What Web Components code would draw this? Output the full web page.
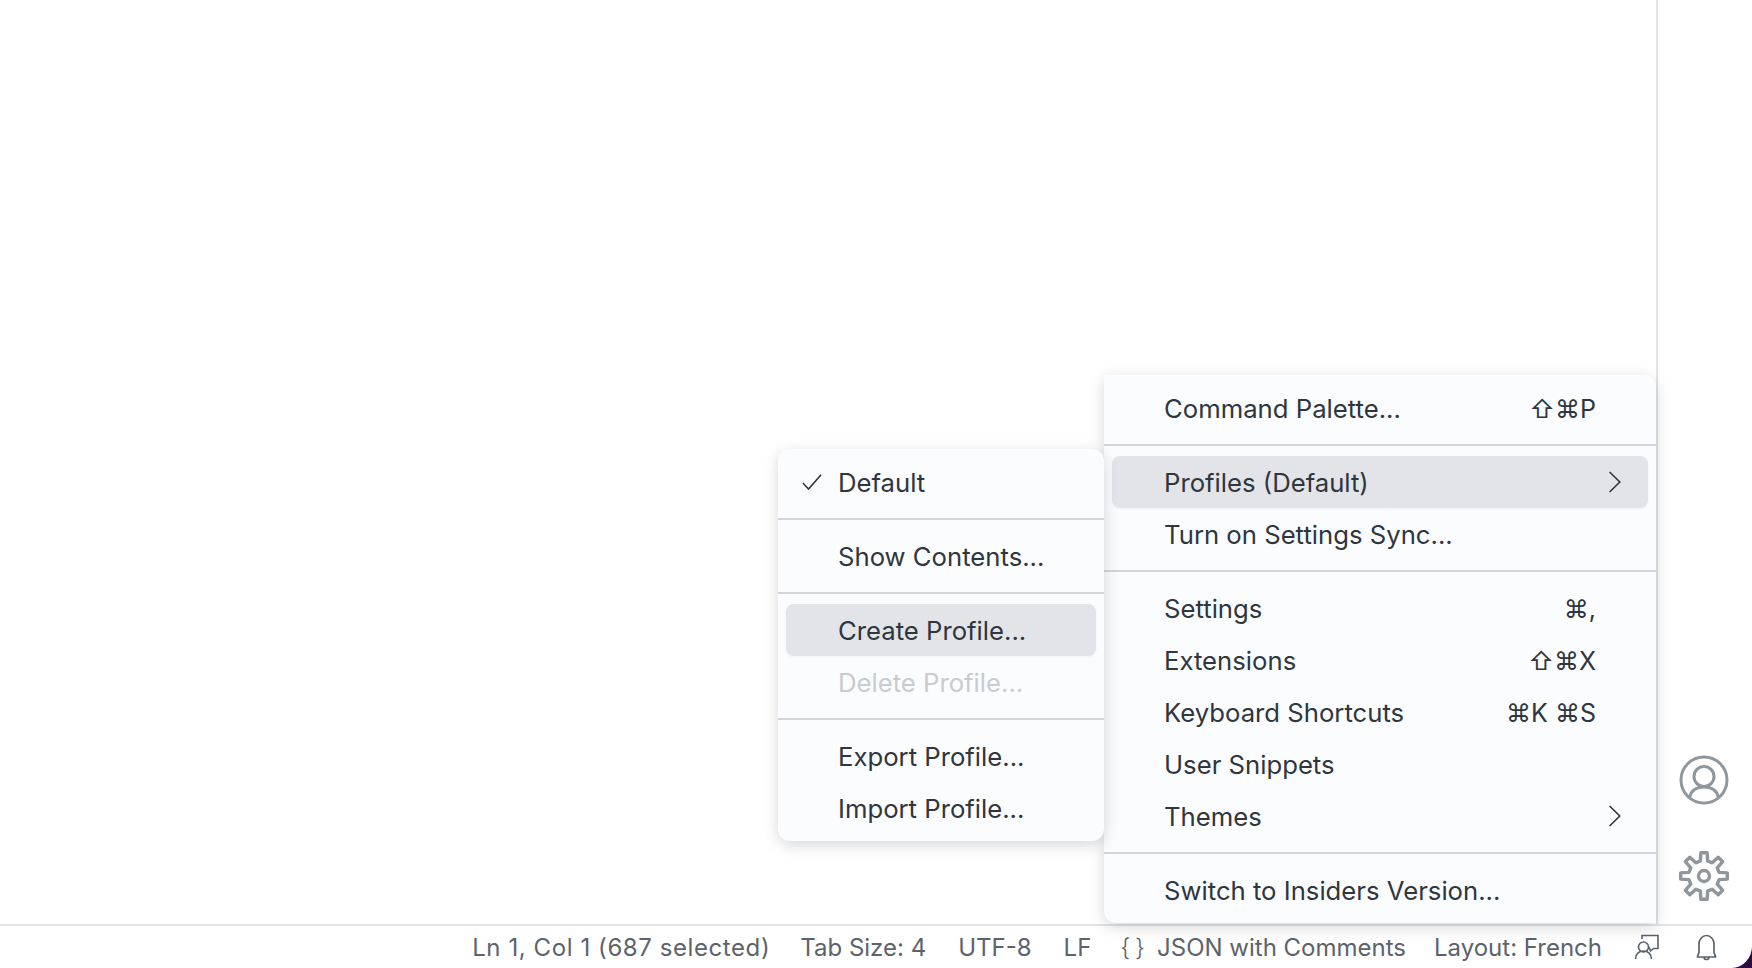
<!DOCTYPE html>
<html><head><meta charset="utf-8"><style>
html,body{margin:0;height:100%;background:#fff;overflow:hidden}
body{font-family:Inter,"Liberation Sans",sans-serif;}
</style></head><body>
<vs-window>
  <vs-menu slot="menus" style="left:1104px;top:375px;width:552px;border-radius:0 12px 0 12px;">
    <vs-item key="⇧⌘P">Command Palette...</vs-item>
    <vs-sep></vs-sep>
    <vs-item active sub>Profiles (Default)</vs-item>
    <vs-item>Turn on Settings Sync...</vs-item>
    <vs-sep></vs-sep>
    <vs-item key="⌘,">Settings</vs-item>
    <vs-item key="⇧⌘X">Extensions</vs-item>
    <vs-item key="⌘K ⌘S">Keyboard Shortcuts</vs-item>
    <vs-item>User Snippets</vs-item>
    <vs-item sub>Themes</vs-item>
    <vs-sep></vs-sep>
    <vs-item>Switch to Insiders Version...</vs-item>
  </vs-menu>
  <vs-menu slot="menus" style="left:778px;top:449px;width:326px">
    <vs-item checked>Default</vs-item>
    <vs-sep></vs-sep>
    <vs-item>Show Contents...</vs-item>
    <vs-sep></vs-sep>
    <vs-item active>Create Profile...</vs-item>
    <vs-item disabled>Delete Profile...</vs-item>
    <vs-sep></vs-sep>
    <vs-item>Export Profile...</vs-item>
    <vs-item>Import Profile...</vs-item>
  </vs-menu>
</vs-window>
<script>
const el=(name,html)=>customElements.define(name,class extends HTMLElement{
  connectedCallback(){ if(this.shadowRoot)return; const r=this.attachShadow({mode:'open'}); r.innerHTML=typeof html==='function'?html(this):html; }
});
const chev='<svg width="32" height="32" viewBox="0 0 16 16" fill="none" stroke="currentColor" stroke-width="0.8"><path d="M5.8 3 L10.900 8 L5.800 13"/></svg>';
const check='<svg width="28" height="28" viewBox="0 0 16 16" fill="none" stroke="currentColor" stroke-width="0.9"><path d="M2.8 8.6 L6 12 L13.2 3.800"/></svg>';
function gearPath(cx,cy,ro,ri){
  let p=[];const n=8,step=Math.PI*2/n;
  for(let i=0;i<n;i++){
    const a=-Math.PI/2+i*step;
    const pt=(r,d)=>[(cx+r*Math.cos(a+d)).toFixed(2),(cy+r*Math.sin(a+d)).toFixed(2)].join(' ');
    p.push(pt(ri,-step*0.30),pt(ro,-step*0.17),pt(ro,step*0.17),pt(ri,step*0.30));
  }
  return 'M'+p.join('L')+'Z';
}
el('vs-item',h=>`<style>
:host{display:flex;align-items:center;height:52px;margin:0 8px;border-radius:8px;color:#2f363d;font-size:25.7px;white-space:nowrap}
:host([active]){background:#e2e4e7;box-shadow:0 1px 3px rgba(0,0,0,.05)}
:host([disabled]){color:#c9cbce}
.c{width:52px;flex:none;display:flex;align-items:center;justify-content:center}
.t{flex:1;padding-top:1px}
.k{padding-right:52px;padding-top:1px;font-size:25px}
.a{position:absolute;right:26px;display:flex}
</style><span class="c">${h.hasAttribute('checked')?check:''}</span><span class="t"><slot></slot></span>${h.getAttribute('key')?`<span class="k">${h.getAttribute('key')}</span>`:''}${h.hasAttribute('sub')?`<span class="a">${chev}</span>`:''}`);
el('vs-sep',`<style>:host{display:block;height:2px;background:#d3d5d8;margin:10px 0}</style>`);
el('vs-menu',`<style>:host{position:absolute;display:block;box-sizing:border-box;padding:7px 0;background:#fbfcfe;border-radius:12px;box-shadow:0 4px 16px rgba(0,0,0,.16)}</style><slot></slot>`);
el('vs-status-item',`<style>:host{display:inline-flex;align-items:center;height:42px;color:#5c636b;font-size:24px;white-space:nowrap}</style><slot></slot>`);
el('vs-statusbar',`<style>:host{display:flex;align-items:center;justify-content:flex-end;height:44px;flex:none;box-sizing:border-box;border-top:2px solid #e3e4e6;background:#fff;padding-right:34px;gap:32px;position:relative}
.corner{position:absolute;right:0;bottom:0;width:20px;height:22px;background:#2e0b42}
.corner i{display:block;width:100%;height:100%;background:#fff;border-bottom-right-radius:20px 22px}
</style><slot></slot><span class="corner"><i></i></span>`);
el('vs-activity-icon',`<style>:host{display:flex;align-items:center;justify-content:center;width:94px;height:96px;margin-left:-2px;flex:none}</style><slot></slot>`);
el('vs-activity',`<style>:host{display:flex;flex-direction:column;align-items:center;justify-content:flex-end;width:96px;flex:none;box-sizing:border-box;border-left:2px solid #e3e4e6;background:#fff}</style><slot></slot>`);
const I='#8f969c',S='#5c636b';
el('vs-window',`<style>:host{display:flex;flex-direction:column;height:968px;width:1752px;position:relative}
.m{flex:1;display:flex;min-height:0}.e{flex:1;background:#fff}</style>
<div class="m"><div class="e"></div><vs-activity>
<vs-activity-icon><svg width="50" height="50" viewBox="0 0 50 50" fill="none" stroke="${I}" stroke-width="3"><circle cx="25" cy="25" r="23"/><circle cx="25" cy="21.500" r="10"/><path d="M10.500 42.500c1.500-6.500 6-10.500 14.500-10.500s13 4 14.500 10.500"/></svg></vs-activity-icon>
<vs-activity-icon><svg width="50" height="50" viewBox="0 0 50 50" fill="none" stroke="${I}" stroke-width="3.400" stroke-linejoin="round"><circle cx="25" cy="25" r="5.500"/><path d="${gearPath(25,25,23.5,15.5)}"/></svg></vs-activity-icon>
</vs-activity></div>
<vs-statusbar>
<vs-status-item><span style="letter-spacing:.58px">Ln 1, Col 1 (687 selected)</span></vs-status-item>
<vs-status-item style="margin-left:-2px">Tab Size: 4</vs-status-item>
<vs-status-item>UTF-8</vs-status-item>
<vs-status-item>LF</vs-status-item>
<vs-status-item style="margin-left:-3px"><span style="margin-right:13px;font-weight:300;letter-spacing:-1px">{ }</span>JSON with Comments</vs-status-item>
<vs-status-item style="margin-left:-4px">Layout: French</vs-status-item>
<vs-status-item><svg width="28" height="28" viewBox="0 0 28 28" fill="none" stroke="${S}" stroke-width="1.600"><circle cx="9.500" cy="14" r="5"/><path d="M1.500 26c0-5 3.500-8 8-8s8 3 8 8M8 6V2.500H24V15.500H19M15 14l1.500 4 3-2.500"/></svg></vs-status-item>
<vs-status-item><svg width="24" height="30" viewBox="0 0 24 30" fill="none" stroke="${S}" stroke-width="1.700"><path d="M3.500 25c0-2 1.500-3 1.500-5V12a7.500 8.500 0 0115 0v8c0 2 1.500 3 1.500 5zM10 25a2.500 2.500 0 005 0"/></svg></vs-status-item>
</vs-statusbar><slot name="menus"></slot>`);
</script></body></html>
